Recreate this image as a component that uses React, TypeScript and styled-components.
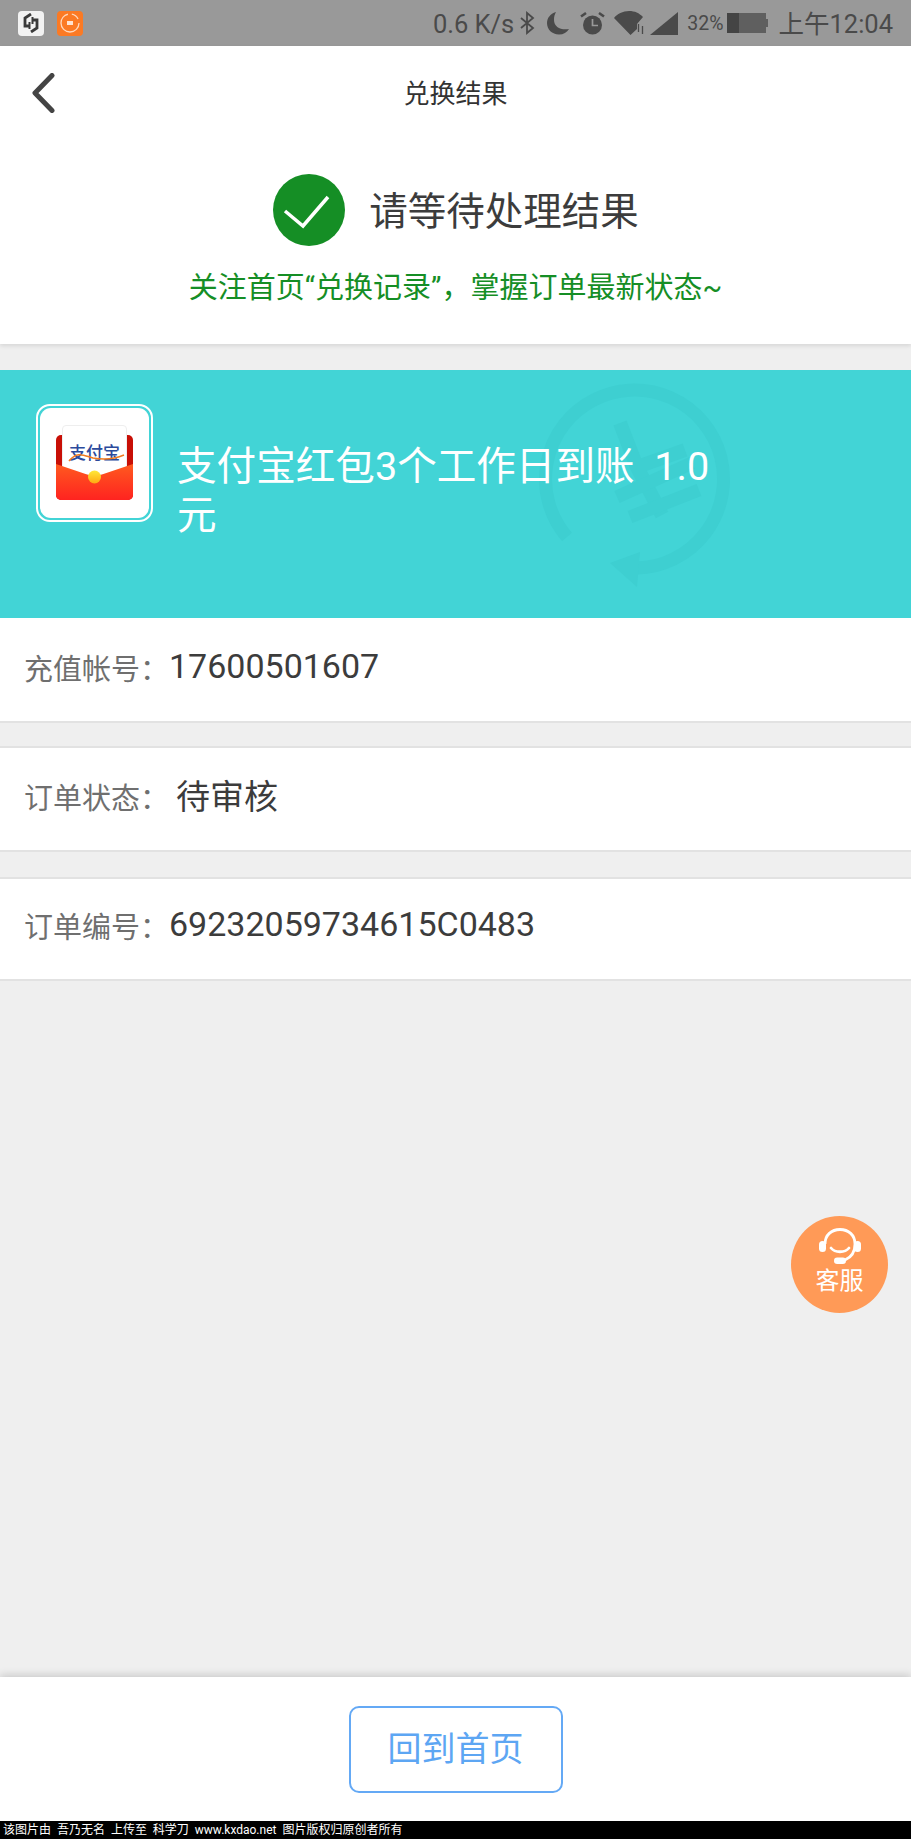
import React from 'react';
import styled, { createGlobalStyle } from 'styled-components';

const GlobalStyle = createGlobalStyle`
  html, body {
    margin: 0;
    padding: 0;
    background: #efefef;
  }
  * {
    box-sizing: border-box;
  }
  body {
    font-family: Roboto, "Noto Sans CJK SC", sans-serif;
  }
`;

const Page = styled.div`
  position: relative;
  width: 911px;
  height: 1839px;
  display: flex;
  flex-direction: column;
  overflow: hidden;
  background: #efefef;
`;

const StatusBar = styled.div`
  height: 46px;
  flex: none;
  display: flex;
  align-items: center;
  justify-content: space-between;
  padding: 0 18px 0 18px;
  background: #999999;
  color: #4a4a4a;
`;

const StatusGroup = styled.div`
  display: flex;
  align-items: center;
  gap: ${p => p.$gap || 0}px;
`;

const StatusText = styled.span`
  margin-left: ${p => p.$left || 0}px;
  padding-top: 2px;
  font-size: ${p => p.$size || 25.5}px;
  line-height: 44px;
  white-space: nowrap;
`;

const StatusIcon = styled.svg`
  flex: none;
  margin-left: ${p => p.$left || 0}px;
`;

const AppBadge = styled.div`
  width: 26px;
  height: 25px;
  border-radius: 4px;
  display: flex;
  align-items: center;
  justify-content: center;
  background: ${p => p.$bg};
`;

const Summary = styled.div`
  flex: none;
  height: 298px;
  background: #ffffff;
  box-shadow: 0 2px 4px rgba(0, 0, 0, 0.1);
`;

const NavBar = styled.div`
  position: relative;
  height: 94px;
  padding-bottom: 4px;
  display: flex;
  align-items: center;
  justify-content: center;
`;

const BackButton = styled.div`
  position: absolute;
  left: 31px;
  top: 27px;
  display: flex;
`;

const NavTitle = styled.h1`
  margin: 0;
  font-size: 26px;
  font-weight: 400;
  color: #333333;
`;

const ResultRow = styled.div`
  margin-top: 33px;
  height: 74px;
  display: flex;
  align-items: center;
  justify-content: center;
  gap: 23px;
`;

const ResultTitle = styled.div`
  margin-bottom: 4px;
  font-size: 38.5px;
  color: #3c3c3c;
  white-space: nowrap;
`;

const ResultHint = styled.div`
  margin-top: 21px;
  text-align: center;
  font-size: 29px;
  line-height: 40px;
  color: #158e25;
`;

const ProductCard = styled.div`
  position: relative;
  flex: none;
  height: 248px;
  margin-top: 26px;
  padding: 34px 0 0 36px;
  display: flex;
  gap: 24px;
  background: #42d4d6;
  overflow: hidden;
`;

const Watermark = styled.svg`
  position: absolute;
  left: 537px;
  top: 10px;
`;

const LogoFrame = styled.div`
  flex: none;
  width: 117px;
  height: 118px;
  display: flex;
  align-items: center;
  justify-content: center;
  padding: 2px;
  border: 2px solid #ffffff;
  border-radius: 14px;
`;

const LogoInner = styled.div`
  width: 100%;
  height: 100%;
  display: flex;
  align-items: center;
  justify-content: center;
  background: #ffffff;
  border-radius: 11px;
`;

const Envelope = styled.div`
  position: relative;
  width: 77px;
  height: 75px;
  margin-bottom: 1px;
`;

const EnvelopeBack = styled.div`
  position: absolute;
  left: 0;
  right: 0;
  top: 10px;
  bottom: 0;
  border-radius: 5px;
  background: #c80f06;
`;

const EnvelopePaper = styled.div`
  position: absolute;
  left: 6px;
  right: 6px;
  top: 0;
  height: 50px;
  padding-top: 17px;
  border: 1px solid #eeeeee;
  border-radius: 4px;
  background: #ffffff;
  text-align: center;
  font-size: 17px;
  line-height: 20px;
  font-weight: 500;
  color: #2b4a9c;
  white-space: nowrap;
`;

const PaperSwoosh = styled.svg`
  position: absolute;
  left: 0;
  top: 23px;
`;

const EnvelopeFlap = styled.svg`
  position: absolute;
  left: 0;
  top: 39px;
`;

const ProductTitle = styled.div`
  position: relative;
  width: 545px;
  margin-top: 38px;
  font-size: 39.6px;
  line-height: 49px;
  color: #ffffff;
`;

const InfoRow = styled.div`
  flex: none;
  height: ${p => p.$height}px;
  margin-top: ${p => p.$gap || 0}px;
  display: flex;
  align-items: center;
  padding: 0 0 ${p => p.$lift || 0}px 24px;
  background: #ffffff;
  border-top: ${p => (p.$gap ? '2px solid #e2e2e2' : 'none')};
  border-bottom: 2px solid #e2e2e2;
`;

const InfoLabel = styled.span`
  flex: none;
  width: ${p => p.$width || 145}px;
  padding-top: 2px;
  font-size: 29px;
  color: #6f6f6f;
`;

const InfoValue = styled.span`
  font-size: 34px;
  color: #3c3c3c;
`;

const Spacer = styled.div`
  flex: 1;
`;

const ServiceButton = styled.div`
  position: absolute;
  left: 791px;
  top: 1216px;
  width: 97px;
  height: 97px;
  padding-top: 12px;
  border-radius: 50%;
  display: flex;
  flex-direction: column;
  align-items: center;
  background: #ff9a57;
  color: #ffffff;
  font-size: 24px;
  line-height: 28px;
`;

const ServiceLabel = styled.span`
  margin-top: 3px;
`;

const Footer = styled.div`
  flex: none;
  height: 144px;
  display: flex;
  align-items: flex-start;
  justify-content: center;
  padding-top: 29px;
  background: #ffffff;
  box-shadow: 0 -2px 8px rgba(0, 0, 0, 0.16);
`;

const HomeButton = styled.div`
  width: 214px;
  height: 87px;
  padding-bottom: 7px;
  display: flex;
  align-items: center;
  justify-content: center;
  border: 2px solid #64a9f5;
  border-radius: 10px;
  font-size: 34px;
  color: #5da6f3;
`;

const Credit = styled.div`
  flex: none;
  height: 18px;
  padding-left: 3px;
  background: #000000;
  color: #ffffff;
  font-size: 12px;
  line-height: 18px;
  white-space: pre;
`;

const BackIcon = () => (
  <svg width="24" height="40" viewBox="0 0 24 40" fill="none">
    <path d="M21 2.500 4 20 21 37.500" stroke="#444444" strokeWidth="5" strokeLinecap="round" strokeLinejoin="round" />
  </svg>
);

const CheckBadge = () => (
  <svg width="74" height="74" viewBox="0 0 74 74">
    <circle cx="37" cy="37" r="36" fill="#158e25" />
    <path d="M13 38 31 53 56 24" fill="none" stroke="#ffffff" strokeWidth="3.500" />
  </svg>
);

const HeadsetIcon = () => (
  <svg width="42" height="36" viewBox="0 0 42 36" fill="none">
    <path d="M6 16C6 7 12.500 1.500 21 1.500S36 7 36 16C36 23 33 29 26 32" stroke="#ffffff" strokeWidth="2.800" />
    <rect x="0" y="13" width="7" height="11" rx="3.500" fill="#ffffff" />
    <rect x="35" y="13" width="7" height="11" rx="3.500" fill="#ffffff" />
    <rect x="15" y="29.500" width="12" height="6.500" rx="3.200" fill="#ffffff" />
    <path d="M12 20C16 25 26 25 30 20" stroke="#ffffff" strokeWidth="2.800" strokeLinecap="round" />
  </svg>
);

const App: React.FC = () => (
  <Page>
    <GlobalStyle />
    <StatusBar>
      <StatusGroup $gap={13}>
        <AppBadge $bg="#f2f2f2">
          <svg width="16" height="20" viewBox="0 0 16 20" fill="none" stroke="#3a3a3a" strokeWidth="2.800">
            <path d="M8 1 2 5v8h5M8 19l6-4V7H9" />
            <path d="M6.500 9v7M9.500 4v7" strokeWidth="2" />
          </svg>
        </AppBadge>
        <AppBadge $bg="#fb7a24">
          <svg width="22" height="22" viewBox="0 0 22 22" fill="none" stroke="#ffd9bd" strokeWidth="1.300">
            <circle cx="11" cy="11" r="9" strokeDasharray="40 4 8 5" />
            <rect x="8" y="9" width="6" height="4" fill="#ffe3d0" stroke="none" />
          </svg>
        </AppBadge>
      </StatusGroup>
      <StatusGroup>
        <StatusText>0.6 K/s</StatusText>
        <StatusIcon $left={5} width="16" height="24" viewBox="0 0 16 24" fill="none" stroke="#4a4a4a" strokeWidth="1.800">
          <path d="M2 7l12 10-6 5V2l6 5L2 17" />
        </StatusIcon>
        <StatusIcon $left={11} width="24" height="24" viewBox="0 0 24 24" fill="#4a4a4a">
          <path d="M10 1C4 3 1 7 1 12c0 6.500 5 11.500 12 11.500 4.500 0 8-2 10-5.500-8 1.500-15-2-15-9 0-3 .5-5.500 2-8z" />
        </StatusIcon>
        <StatusIcon $left={10} width="25" height="24" viewBox="0 0 25 24">
          <circle cx="12.500" cy="14" r="9.500" fill="#4a4a4a" />
          <path d="M12.500 8v6.500H18" fill="none" stroke="#999999" strokeWidth="1.700" />
          <path d="M1 5.500 6 2M24 5.500 19 2" stroke="#4a4a4a" strokeWidth="2.600" />
        </StatusIcon>
        <StatusIcon $left={9} width="31" height="24" viewBox="0 0 31 24" fill="#4a4a4a">
          <path d="M0 7C3 3 9 0 15 0s10 2 14 6L23 13V18L16.500 24z" />
          <path d="M24.500 13v8M28.500 15v8" stroke="#4a4a4a" strokeWidth="1.300" />
        </StatusIcon>
        <StatusIcon $left={5} width="28" height="23" viewBox="0 0 28 23" fill="#4a4a4a">
          <path d="M28 0v23H0z" />
        </StatusIcon>
        <StatusText $size={19.500} $left={9}>32%</StatusText>
        <StatusIcon $left={4} width="41" height="20" viewBox="0 0 41 20">
          <rect x="0" y="0" width="39" height="20" fill="#5f5f5f" />
          <rect x="0" y="0" width="12" height="20" fill="#444444" />
          <rect x="39" y="6" width="2" height="8" fill="#5f5f5f" />
        </StatusIcon>
        <StatusText $left={10}>上午12:04</StatusText>
      </StatusGroup>
    </StatusBar>

    <Summary>
      <NavBar>
        <BackButton>
          <BackIcon />
        </BackButton>
        <NavTitle>兑换结果</NavTitle>
      </NavBar>
      <ResultRow>
        <CheckBadge />
        <ResultTitle>请等待处理结果</ResultTitle>
      </ResultRow>
      <ResultHint>关注首页“兑换记录”，掌握订单最新状态~</ResultHint>
    </Summary>

    <ProductCard>
      <Watermark width="210" height="215" viewBox="0 0 210 215" fill="none" stroke="#3ecfd1">
        <path d="M30 157A89 89 0 1 1 100 188" strokeWidth="13" />
        <path d="M103 172 73 183l27 24z" fill="#3ecfd1" stroke="none" />
        <path d="M83 43 100 87 125 135M100 87 148 70" strokeWidth="14" />
        <path d="M80 117 155 83M93 137 162 110" strokeWidth="13" />
      </Watermark>
      <LogoFrame>
        <LogoInner>
          <Envelope>
            <EnvelopeBack />
            <EnvelopePaper>
              支付宝
              <PaperSwoosh width="65" height="16" viewBox="0 0 65 16" fill="none">
                <path d="M6 12C14 2 20 6 30 9C42 11 54 9 61 6" stroke="#f07a1e" strokeWidth="1.500" />
              </PaperSwoosh>
            </EnvelopePaper>
            <EnvelopeFlap width="77" height="36" viewBox="0 0 77 36">
              <defs>
                <linearGradient id="flapFill" x1="0" y1="0" x2="0" y2="1">
                  <stop offset="0" stopColor="#ff5a1f" />
                  <stop offset="1" stopColor="#ff2320" />
                </linearGradient>
                <linearGradient id="sealFill" x1="0" y1="0" x2="0" y2="1">
                  <stop offset="0" stopColor="#ffe93a" />
                  <stop offset="1" stopColor="#ffa812" />
                </linearGradient>
              </defs>
              <path d="M0 0 38.500 13 77 0V31a5 5 0 0 1-5 5H5a5 5 0 0 1-5-5z" fill="url(#flapFill)" />
              <circle cx="38.500" cy="13" r="6.500" fill="url(#sealFill)" />
            </EnvelopeFlap>
          </Envelope>
        </LogoInner>
      </LogoFrame>
      <ProductTitle>支付宝红包3个工作日到账&nbsp; 1.0元</ProductTitle>
    </ProductCard>

    <InfoRow $height={105} $lift={8}>
      <InfoLabel>充值帐号：</InfoLabel>
      <InfoValue>17600501607</InfoValue>
    </InfoRow>
    <InfoRow $height={106} $gap={23} $lift={9}>
      <InfoLabel $width={152}>订单状态：</InfoLabel>
      <InfoValue>待审核</InfoValue>
    </InfoRow>
    <InfoRow $height={104} $gap={25} $lift={11}>
      <InfoLabel>订单编号：</InfoLabel>
      <InfoValue>69232059734615C0483</InfoValue>
    </InfoRow>

    <Spacer />

    <ServiceButton>
      <HeadsetIcon />
      <ServiceLabel>客服</ServiceLabel>
    </ServiceButton>

    <Footer>
      <HomeButton>回到首页</HomeButton>
    </Footer>
    <Credit>该图片由  吾乃无名  上传至  科学刀  www.kxdao.net  图片版权归原创者所有</Credit>
  </Page>
);

export default App;
